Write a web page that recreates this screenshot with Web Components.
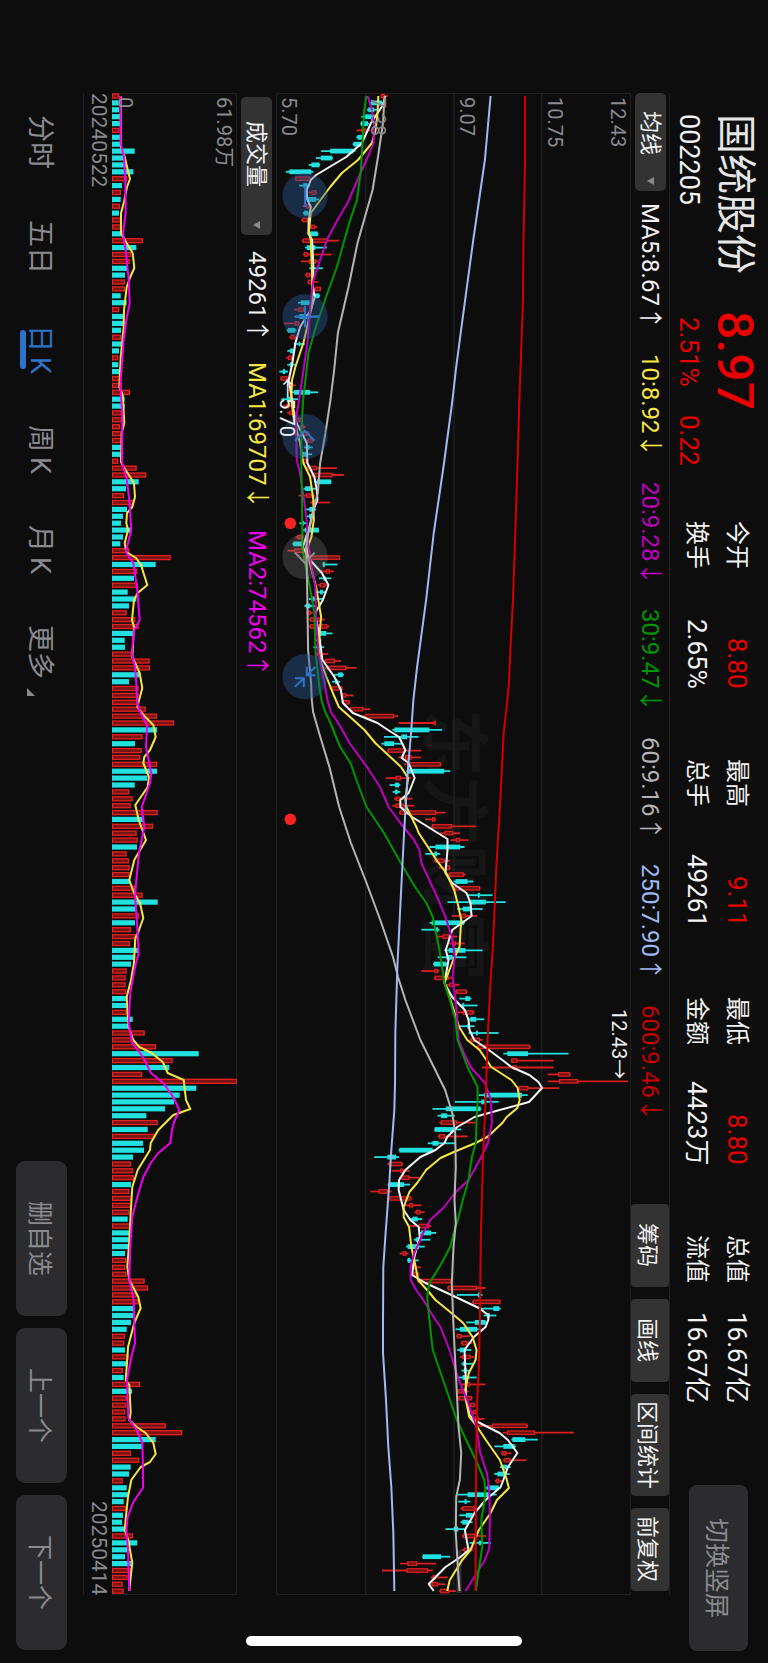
<!DOCTYPE html>
<html lang="zh-CN">
<head>
<meta charset="UTF-8">
<meta name="viewport" content="width=device-width, initial-scale=1.0">
<title>国统股份 002205</title>
<style>
  :root {
    --bg: #0d0d0d;
    --line: #202020;
    --chip: #333333;
    --button: #2c2c2e;
    --muted: #8a8a8e;
    --text: #f2f2f2;
    --up: #ea0000;
    --accent: #2f73c9;
  }
  html, body {
    margin: 0;
    height: 100%;
    background: var(--bg);
  }
  body {
    color: var(--text);
    font-family: Roboto, "Noto Sans CJK SC", sans-serif;
    overflow: hidden;
  }
</style>
</head>
<body>
<stock-screen>
  <quote-header slot="header" name="国统股份" code="002205" price="8.97" percent="2.51%" change="0.22">
    <stat-item label="今开" value="8.80" up></stat-item>
    <stat-item label="最高" value="9.11" up></stat-item>
    <stat-item label="最低" value="8.80" up></stat-item>
    <stat-item label="总值" value="16.67亿"></stat-item>
    <stat-item label="换手" value="2.65%"></stat-item>
    <stat-item label="总手" value="49261"></stat-item>
    <stat-item label="金额" value="4423万"></stat-item>
    <stat-item label="流值" value="16.67亿"></stat-item>
  </quote-header>

  <indicator-bar slot="main" label="均线" class="main">
    <ma-value style="color:#f2f2f2">MA5:8.67↑</ma-value>
    <ma-value style="color:#f5e642">10:8.92↓</ma-value>
    <ma-value style="color:#bf00bf">20:9.28↓</ma-value>
    <ma-value style="color:#009600">30:9.47↓</ma-value>
    <ma-value style="color:#b4b4b4">60:9.16↑</ma-value>
    <ma-value style="color:#a0b9f5">250:7.90↑</ma-value>
    <ma-value style="color:#c80000">600:9.46↓</ma-value>
    <tool-chip slot="tools">筹码</tool-chip>
    <tool-chip slot="tools">画线</tool-chip>
    <tool-chip slot="tools">区间统计</tool-chip>
    <tool-chip slot="tools">前复权</tool-chip>
  </indicator-bar>
  <price-chart slot="main"></price-chart>

  <indicator-bar slot="volume" label="成交量" inset>
    <ma-value style="color:#f2f2f2">49261↑</ma-value>
    <ma-value style="color:#f5e642">MA1:69707↓</ma-value>
    <ma-value style="color:#f000f0">MA2:74562↑</ma-value>
  </indicator-bar>
  <volume-chart slot="volume"></volume-chart>
  <date-axis slot="volume" from="20240522" to="20250414"></date-axis>

  <period-bar slot="footer"></period-bar>
</stock-screen>

<script>
// Landscape screen on a portrait window: everything below runs in
// vertical-rl, so "inline" is top to bottom and "block" is right to left.

const STEP = 6.89;
const FIRST = 3;
const LENGTH = 1502;

const CANDLES = `
r330,332,343,352 c298,303,335,340 c290,294,312,322 c273,285,305,312 c270,272,293,296 r259,274,286,300 c258,262,278,280 c247,250,272,277 c153,180,250,256 c137,152,186,188
c116,124,148,150 c47,58,124,130 r76,76,121,124 c87,100,112,120 r115,124,138,141 c105,112,138,147 r98,108,118,124 c98,101,115,118 r93,97,113,118 r118,122,134,142
c112,118,143,145 r95,98,172,206 c105,110,136,170 r98,102,113,184 r92,117,138,144 c118,124,130,158 r104,108,120,126 r112,114,130,144 r126,134,152,153 c124,132,148,150
c84,92,118,122 r72,84,101,104 c74,88,112,148 r41,74,86,90 c50,53,76,79 r58,62,74,80 c72,86,90,104 c52,60,70,75 r48,54,66,72 c52,60,68,76
c28,38,46,54 r30,32,52,62 r50,56,66,77 c66,72,120,144 c34,50,64,84 r40,48,58,64 r52,58,74,78 r76,82,92,94 r88,95,102,108 r96,100,117,120
r108,114,128,132 c102,108,118,128 c90,95,112,126 r90,96,110,114 r105,112,140,200 r124,126,187,221 c134,140,183,184 c100,105,122,138 r86,108,124,134 r120,126,138,180
c105,118,130,138 c110,117,126,130 c88,96,102,112 c96,104,146,147 r76,82,95,100 c67,70,98,100 r52,72,110,120 r100,100,209,210 c157,158,164,202 r148,167,179,191
c146,160,166,183 r143,149,165,170 c143,150,158,166 c116,124,134,160 c103,107,121,136 r108,112,122,128 r117,120,150,164 r115,120,172,178 c140,146,168,187 c138,142,150,154
c130,140,148,162 r138,142,154,174 r160,166,194,213 r164,170,228,259 c192,204,218,221 c186,195,202,210 r178,184,216,218 r212,216,228,250 r215,219,238,240 r236,240,279,300
r276,285,371,383 r385,490,494,495 c366,372,477,515 c341,393,410,444 c333,342,371,398 r350,353,404,453 r384,404,424,452 r400,414,511,513 c408,412,521,539 r346,376,392,422
c358,374,386,390 c367,374,382,390 r371,376,390,426 r366,376,400,432 r386,388,497,525 r464,485,494,496 r482,485,545,617 r509,522,548,568 r541,556,568,594 c477,495,569,582
c465,492,500,509 r490,495,522,538 r505,525,538,541 r532,536,580,586 c549,555,591,608 r545,552,628,630 c591,622,628,666 c531,596,646,705 c560,577,600,636 r544,572,586,620
c478,484,580,583 c453,493,503,507 r498,516,536,560 r536,548,556,582 c522,535,585,636 c502,528,546,588 c488,490,528,532 r452,492,503,507 r490,493,535,545 r528,536,550,567
r552,557,589,591 c566,584,598,603 c570,575,581,621 r560,577,609,612 c590,599,617,641 c566,590,597,612 c594,616,622,684 r597,600,628,637 r615,622,778,780 c698,710,772,893
r720,722,740,848 r635,726,738,848 r831,862,898,900 r831,865,922,1071 r740,744,773,865 c624,640,754,771 c553,632,642,684 c486,526,630,632 c501,512,530,553 r506,511,560,614
c491,493,552,572 r502,505,523,591 c472,486,504,554 c385,387,486,490 c312,351,377,386 r351,356,396,398 r364,390,400,418 r386,393,417,446 c352,356,401,419 r300,325,352,364
r354,357,421,424 r398,416,428,453 r432,438,450,463 c417,426,442,455 r419,445,477,483 c446,452,482,497 c430,436,446,480 c407,412,446,463 r388,397,408,415 c410,412,420,445
r420,426,436,452 r425,430,444,447 r440,444,542,544 r530,532,619,645 c559,622,629,636 r604,607,689,690 c632,668,686,690 c640,650,658,677 c587,613,645,652 c555,568,620,630
r557,559,573,598 r570,573,591,605 c560,568,586,602 r568,575,600,612 c573,577,584,607 c573,580,588,600 c560,576,586,618 r570,586,598,645 r560,563,576,594 r560,564,604,606
r590,600,613,615 r604,608,618,622 r604,612,624,641 r615,664,770,772 r697,709,793,909 c722,725,764,801 c671,698,732,736 r690,695,707,722 r697,701,719,767 c688,695,710,720
c671,680,700,717 r673,676,686,694 c646,650,684,690 c562,591,655,678 c563,582,588,599 r569,575,612,614 c566,586,606,610 c570,575,594,606 c525,550,563,582 r574,577,614,646
c597,625,632,661 r573,580,600,608 c455,457,512,539 r389,411,440,497 r335,409,473,487 r481,487,496,532 r478,485,502,524 r506,509,536,556`;

const VOLUMES = `
r358 c365 c357 c360 c360 r358 c360 c363 c404 c376 c378 c400 r382 c366 r363 c362 r360 c357 r363 r363
c372 r429 c409 r394 r389 c383 c375 r375 r375 c362 c380 r358 c370 c372 c363 r364 c367 c357 r355 c355
c360 r364 r366 r390 c374 c374 r366 r366 r360 r366 r366 c362 c362 r355 r410 r439 c416 c378 r372 r400
c381 c369 c363 c395 c369 c361 r388 r512 c467 r412 c402 r413 c383 c409 c387 r380 r406 r416 c398 c374
c375 r395 r449 r450 c418 c387 r416 r416 r412 r437 r471 r522 c471 r428 c405 r425 r421 r472 c471 c442
c404 r388 r398 r392 r473 c430 r459 r410 r413 c411 r380 r387 r389 r389 c390 r405 r428 c473 c408 r418
c405 r393 r412 r390 c414 c403 c393 r380 r377 r377 r379 c382 c382 r380 c398 c388 r434 r395 r468 c596
r518 c508 r427 r712 c589 c539 c522 c495 c439 r473 c443 r465 c429 c432 c399 r393 r399 r402 c393 r388
r395 r394 r388 c383 r393 c390 c390 c388 c375 r379 r376 r380 r434 r444 r410 r416 c400 c400 c393 c380
r375 r373 c375 r386 c380 r369 c371 r420 c396 r381 r379 r376 r377 r497 r547 c467 c427 r393 r418 c392
c387 r368 c380 c384 c371 r378 c369 c366 c374 r399 c412 c385 c375 c393 r394 r383 r368 r371`;

// each point is position:value
const PRICE_LINES = [
  ['#f5f5f5', '96:345 105:338 123:302 143:275 157:228 167:178 175:138 180:122 190:110 199:111 207:122 220:116 233:115 240:126 267:130 287:128 297:134 310:122 327:90 343:76 363:67 380:56 400:66 420:75 433:95 443:110 463:112 477:133 490:140 500:142 510:130 527:118 547:98 560:120 573:155 585:175 600:158 613:135 633:146 660:157 677:193 690:212 703:218 713:248 723:322 730:353 737:386 750:405 758:394 763:415 778:433 793:415 800:390 807:390 817:425 839:531 850:531 873:525 883:545 893:588 903:600 916:603 930:545 950:526 960:534 983:522 997:545 1010:583 1020:594 1030:597 1040:611 1050:655 1060:695 1067:722 1075:776 1082:803 1088:814 1102:775 1110:687 1117:612 1127:560 1137:530 1143:522 1150:495 1157:450 1170:405 1180:386 1190:385 1210:400 1220:420 1227:445 1237:448 1257:432 1275:425 1283:465 1293:530 1308:625 1315:653 1320:653 1327:645 1337:610 1350:582 1380:586 1397:586 1415:597 1420:610 1433:687 1440:712 1453:740 1467:712 1480:698 1487:690 1500:645 1513:612 1530:583 1550:594 1557:570 1567:525 1584:475 1591:490'],
  ['#f5e642', '96:324 113:322 130:316 143:305 160:263 173:215 187:180 213:122 233:116 240:122 267:125 287:127 307:125 317:118 343:100 367:76 380:66 400:64 420:72 443:90 463:100 477:120 500:130 520:131 537:124 550:110 567:122 587:138 603:146 617:153 647:145 660:150 677:169 693:188 707:206 720:250 730:283 743:315 757:360 767:392 778:413 800:405 807:408 827:438 833:445 860:498 873:527 890:551 907:564 920:572 947:567 960:548 983:522 1000:540 1027:566 1040:590 1050:627 1067:662 1080:722 1088:741 1100:747 1108:740 1117:708 1123:695 1137:650 1143:615 1152:550 1158:510 1170:467 1183:440 1192:417 1207:400 1217:400 1227:416 1247:423 1267:436 1280:443 1293:478 1300:495 1310:532 1323:578 1337:606 1350:618 1360:615 1373:595 1393:582 1417:596 1427:620 1440:646 1460:688 1477:706 1488:715 1500:679 1513:660 1530:625 1550:600 1560:575 1580:538 1591:530'],
  ['#bf00bf', '96:292 110:305 123:311 143:310 153:298 173:271 203:232 220:202 240:170 280:130 307:120 340:113 380:96 400:87 420:77 460:80 473:90 500:102 523:110 547:115 567:124 587:136 613:137 653:145 683:163 700:172 712:182 725:208 743:238 767:290 787:329 807:355 823:390 840:431 850:447 863:453 897:500 917:525 937:544 957:553 977:546 1000:555 1020:560 1040:564 1053:580 1067:600 1083:643 1100:661 1123:664 1143:652 1157:632 1180:594 1193:553 1207:521 1220:479 1233:458 1253:432 1267:420 1280:421 1290:437 1300:459 1320:495 1327:510 1350:537 1380:565 1400:590 1427:618 1453:629 1473:649 1490:656 1517:658 1548:656 1560:643 1591:585'],
  ['#009600', '96:288 113:281 140:277 170:272 200:260 223:237 267:200 293:172 327:137 353:115 380:106 400:99 433:94 467:94 500:96 547:97 563:105 587:119 613:133 650:136 687:148 700:154 710:163 720:177 747:210 763:241 787:266 807:289 833:341 867:398 887:434 903:468 917:487 950:507 983:522 1000:538 1020:555 1040:561 1067:591 1087:621 1100:621 1120:618 1143:616 1157:604 1180:594 1200:577 1220:562 1233:550 1247:539 1267:507 1283:477 1297:470 1320:477 1350:487 1387:525 1420:559 1433:577 1460:616 1480:641 1490:644 1500:642 1520:632 1547:635 1560:629 1591:616'],
  ['#b4b4b4', '96:343 123:338 157:323 190:307 243:262 287:235 333:203 347:199 370:192 400:181 433:166 463:150 493:143 507:132 520:124 537:112 547:108 567:110 600:112 650:114 683:123 700:125 712:129 733:147 767:178 807:207 843:242 883:289 920:330 957:368 977:383 1000:405 1040:450 1090:524 1113:545 1133:554 1167:556 1200:552 1223:556 1247:549 1283:544 1320:548 1353:553 1400:560 1427:564 1453:572 1480:568 1497:557 1533:556 1567:562 1591:567'],
  ['#a0b9f5', '96:660 160:643 240:608 317:577 370:556 400:546 467:519 533:490 600:467 667:440 700:429 733:422 767:413 833:401 900:391 967:381 1033:375 1083:374 1110:372 1150:363 1183:357 1233:346 1267:339 1320:338 1353:338 1400:347 1447:354 1487:363 1533:369 1591:372'],
  ['#d20000', '96:763 162:763 245:758 300:757 400:746 500:737 600:727 650:719 683:715 700:710 733:699 800:689 867:677 900:673 947:667 980:660 1033:652 1100:645 1160:637 1200:634 1233:631 1320:628 1367:625 1400:620 1450:617 1500:616 1591:615']
];

const VOLUME_LINES = [
  ['#f5e642', '96:362 147:363 157:374 168:382 179:390 187:381 202:372 213:363 233:363 242:378 253:398 268:403 277:391 287:380 310:372 327:371 357:362 387:358 395:368 423:373 433:365 462:363 468:373 483:402 497:405 507:397 513:381 523:379 530:384 543:374 552:379 558:408 565:423 585:442 593:413 600:402 620:396 627:402 657:397 673:419 688:427 707:412 717:436 725:460 737:467 750:450 757:433 763:430 777:447 787:443 805:406 820:416 840:438 860:403 880:388 893:402 903:420 918:430 932:415 938:406 963:402 980:393 997:380 1015:383 1027:386 1040:400 1047:418 1053:455 1062:488 1073:503 1080:551 1100:558 1109:571 1115:520 1130:475 1143:452 1150:450 1170:413 1187:397 1213:392 1240:388 1267:382 1280:388 1297:415 1308:422 1323:403 1347:384 1363:381 1380:377 1385:388 1413:392 1420:388 1427:410 1433:437 1443:460 1454:467 1462:450 1467:422 1480:394 1497:384 1513:379 1530:374 1540:385 1563:397 1577:392 1591:388'],
  ['#f000f0', '96:362 143:362 157:372 180:376 213:377 233:369 253:378 280:386 303:389 320:379 340:371 363:366 387:361 413:367 462:366 479:380 500:388 530:394 552:377 563:400 590:412 620:419 630:403 653:395 667:405 683:409 700:411 710:418 725:441 747:438 773:454 783:450 807:425 827:433 853:417 880:409 897:405 917:410 953:416 967:405 993:391 1023:386 1043:397 1057:429 1073:453 1083:490 1097:520 1110:538 1123:521 1130:516 1143:511 1153:475 1163:452 1177:430 1197:412 1217:397 1247:391 1280:388 1300:401 1323:403 1343:405 1357:394 1380:381 1418:385 1430:410 1443:427 1467:429 1488:429 1502:400 1517:383 1530:379 1550:384 1591:388']
];

const round = (n) => Math.round(n * 10) / 10;

function drawLines(lines, x) {
  return lines.map(([color, points]) => {
    const list = points.split(' ').map((p) => {
      const [pos, value] = p.split(':').map(Number);
      return round(x(value)) + ',' + (pos - 93);
    });
    return `<polyline points="${list.join(' ')}" fill="none" stroke="${color}" stroke-width="2" stroke-linejoin="round"/>`;
  }).join('');
}

class StockScreen extends HTMLElement {
  connectedCallback() {
    this.attachShadow({ mode: 'open' }).innerHTML = `
      <style>
        :host {
          position: relative;
          display: flex;
          flex-direction: column;
          box-sizing: border-box;
          width: 100%;
          height: 100%;
          writing-mode: vertical-rl;
          text-orientation: sideways;
          background: var(--bg);
        }
        section {
          display: flex;
          flex-direction: column;
          min-block-size: 0;
          margin-inline: 93px 68px;
        }
        .main { flex: 394 1 0; }
        .volume { flex: 193 1 0; }
        .home {
          position: absolute;
          bottom: 17px;
          left: 32%;
          right: 32%;
          height: 10px;
          border-radius: 5px;
          background: white;
        }
      </style>
      <slot name="header"></slot>
      <section class="main"><slot name="main"></slot></section>
      <section class="volume"><slot name="volume"></slot></section>
      <slot name="footer"></slot>
      <div class="home"></div>
    `;
  }
}

class QuoteHeader extends HTMLElement {
  connectedCallback() {
    const get = (key) => this.getAttribute(key);
    this.attachShadow({ mode: 'open' }).innerHTML = `
      <style>
        :host {
          display: flex;
          flex: none;
          align-items: flex-start;
          box-sizing: border-box;
          block-size: 98px;
          padding-inline: 114px 12px;
        }
        .quote {
          display: grid;
          grid-template-columns: 197px 210px;
          grid-template-rows: 54px 38px;
          align-items: center;
          padding-block-start: 6px;
        }
        h1, p { margin: 0; }
        h1 {
          font-size: 40px;
          font-weight: 400;
          line-height: 54px;
          color: #e6e6e6;
        }
        .code { font-size: 27px; line-height: 38px; }
        .price {
          font-size: 50px;
          font-weight: 500;
          line-height: 54px;
          color: var(--up);
        }
        .change {
          display: flex;
          gap: 28px;
          padding-inline-start: 6px;
          font-size: 26px;
          line-height: 38px;
          color: var(--up);
        }
        .stats {
          flex: 1;
          display: grid;
          grid-template-columns: repeat(4, 1fr);
          column-gap: 70px;
          padding-block-start: 11px;
          margin-inline-end: 82px;
        }
        button {
          inline-size: 166px;
          block-size: 59px;
          margin: 0;
          margin-block-start: 20px;
          padding: 0;
          border: 0;
          border-radius: 8px;
          background: var(--button);
          color: var(--muted);
          font: inherit;
          font-size: 25px;
        }
      </style>
      <div class="quote">
        <h1>${get('name')}</h1>
        <p class="price">${get('price')}</p>
        <p class="code">${get('code')}</p>
        <p class="change"><span>${get('percent')}</span><span>${get('change')}</span></p>
      </div>
      <div class="stats"><slot></slot></div>
      <button type="button">切换竖屏</button>
    `;
  }
}

class StatItem extends HTMLElement {
  connectedCallback() {
    this.attachShadow({ mode: 'open' }).innerHTML = `
      <style>
        :host {
          display: flex;
          justify-content: space-between;
          align-items: center;
          line-height: 40px;
          white-space: nowrap;
        }
        .label { font-size: 24px; }
        .value { font-size: 26px; }
        :host([up]) .value { color: var(--up); }
      </style>
      <span class="label">${this.getAttribute('label')}</span>
      <span class="value">${this.getAttribute('value')}</span>
    `;
  }
}

class IndicatorBar extends HTMLElement {
  connectedCallback() {
    const label = this.getAttribute('label');
    this.attachShadow({ mode: 'open' }).innerHTML = `
      <style>
        :host {
          display: flex;
          flex: none;
          align-items: center;
          box-sizing: border-box;
          block-size: 39px;
        }
        :host(.main) {
          border-block-start: 1px solid var(--line);
        }
        .picker {
          display: flex;
          align-items: center;
          justify-content: space-between;
          box-sizing: border-box;
          block-size: 31px;
          inline-size: 98px;
          padding-inline: 18px 6px;
          border-radius: 5px;
          background: var(--chip);
        }
        :host([inset]) .picker {
          inline-size: 138px;
          padding-inline: 24px 6px;
          margin-inline-start: 4px;
        }
        select {
          appearance: none;
          margin: 0;
          padding: 0;
          border: 0;
          background: none;
          color: var(--text);
          font: inherit;
          font-size: 22px;
          line-height: 31px;
        }
        svg { width: 7px; height: 8px; flex: none; fill: var(--muted); }
        .values {
          flex: 1;
          display: flex;
          gap: 24px;
          padding-inline-start: 12px;
        }
        :host([inset]) .values { gap: 20px; padding-inline-start: 16px; }
        .tools { display: flex; gap: 12px; margin-inline-end: 4px; }
      </style>
      <div class="picker">
        <select aria-label="${label}"><option>${label}</option></select>
        <svg viewBox="0 0 7 8"><path d="M0 4L7 0V8z"/></svg>
      </div>
      <div class="values"><slot></slot></div>
      <div class="tools"><slot name="tools"></slot></div>
    `;
  }
}

class MaValue extends HTMLElement {
  connectedCallback() {
    this.attachShadow({ mode: 'open' }).innerHTML = `
      <style>
        :host {
          display: block;
          font-size: 24px;
          line-height: 38px;
          white-space: nowrap;
        }
      </style>
      <slot></slot>
    `;
  }
}

class ToolChip extends HTMLElement {
  connectedCallback() {
    this.attachShadow({ mode: 'open' }).innerHTML = `
      <style>
        :host { display: block; }
        button {
          display: block;
          min-inline-size: 83px;
          block-size: 38px;
          margin: 0;
          padding: 0;
          padding-inline: 7px;
          border: 0;
          border-radius: 4px;
          background: var(--chip);
          color: var(--text);
          font: inherit;
          font-size: 22px;
          white-space: nowrap;
        }
      </style>
      <button type="button"><slot></slot></button>
    `;
  }
}

class PriceChart extends HTMLElement {
  connectedCallback() {
    const x = (v) => (v - 18) / 3;
    const candles = CANDLES.trim().split(/\s+/).map((item, i) => {
      const [low, from, to, high] = item.slice(1).split(',').map((v) => round(x(+v)));
      const y = round(FIRST + i * STEP);
      const up = item[0] === 'r';
      const color = up ? '#dc1e1e' : '#22e1e1';
      const body = up
        ? `<rect x="${from + 0.5}" y="${y - 1.7}" width="${Math.max(1, to - from - 1)}" height="3.4" fill="#641414" stroke="${color}" stroke-width="1.3"/>`
        : `<rect x="${from}" y="${y - 2.4}" width="${Math.max(1.5, to - from)}" height="4.8" fill="${color}"/>`;
      return `<path d="M${low} ${y}H${high}" stroke="${color}" stroke-width="1.8"/>${body}`;
    }).join('');

    this.attachShadow({ mode: 'open' }).innerHTML = `
      <style>
        :host {
          position: relative;
          display: block;
          flex: 1;
          min-block-size: 0;
          box-sizing: border-box;
          outline: 1px solid var(--line);
          outline-offset: -1px;
        }
        svg {
          position: absolute;
          inset: 0;
          width: 100%;
          height: 100%;
          overflow: visible;
        }
        span {
          position: absolute;
          inset-inline-start: 4px;
          font-size: 20px;
          line-height: 26px;
          color: var(--muted);
        }
        .watermark {
          inset-inline-start: 41%;
          inset-block-end: 40%;
          font-size: 68px;
          font-weight: 700;
          line-height: 70px;
          color: #161616;
        }
        .high, .low { color: #f0f0f0; }
        .high {
          inset-block-start: -1px;
          inset-inline: auto calc(34% + 5px);
        }
        .low { inset-block-end: -2px; inset-inline-start: 19%; }
      </style>
      <span class="watermark" aria-hidden="true">东方财富</span>
      <svg viewBox="0 0 354 ${LENGTH}" preserveAspectRatio="none">
        <path d="M89.5 0V1502M177.5 0V1502M265 0V1502" stroke="#242424" stroke-width="1.2"/>
        <path d="M182.5 1457V1500" stroke="#303030" stroke-width="5"/>
        ${candles}
        ${drawLines(PRICE_LINES, x)}
        <g fill="#f52222">
          <circle cx="14.3" cy="430.3" r="5.8"/>
          <circle cx="14.3" cy="726.3" r="5.8"/>
        </g>
        <g fill="#2a5a96" fill-opacity="0.42">
          <circle cx="29" cy="102.7" r="22.6"/>
          <circle cx="29" cy="223.7" r="22.6"/>
          <circle cx="29" cy="343.7" r="22.6"/>
          <circle cx="29" cy="583.7" r="22.6"/>
        </g>
        <circle cx="29" cy="463.7" r="22.6" fill="#909090" fill-opacity="0.25"/>
        <g fill="none" stroke="#2f73c9" stroke-width="2">
          <path d="M29 92.7V113.7"/>
          <path d="M29 213V234.5M18.5 223.7H43"/>
          <path d="M19 347.7L28.500 337.7L38.500 347.7"/>
          <path d="M39.5 573.7L30.7 582.3M30.7 573.7V582.3H39.5"/>
          <path d="M19 593.7L27.7 585.3M19 585.3H27.7V594.3"/>
        </g>
        <path d="M19 459.7L28.7 469.7L38.5 459.7" fill="none" stroke="#8c8c8c" stroke-width="2"/>
      </svg>
      <span style="inset-block-end: 0">5.70</span>
      <span style="inset-block-end: 25%">7.38</span>
      <span style="inset-block-end: 50%">9.07</span>
      <span style="inset-block-end: 75%">10.75</span>
      <span style="inset-block-start: 0">12.43</span>
      <span class="high">12.43→</span>
      <span class="low">←5.70</span>
    `;
  }
}

class VolumeChart extends HTMLElement {
  connectedCallback() {
    const x = (v) => (v - 336) / 3;
    const bars = VOLUMES.trim().split(/\s+/).map((item, i) => {
      const width = x(+item.slice(1));
      const y = FIRST + i * STEP;
      if (item[0] === 'r') {
        return `<rect x="0.6" y="${round(y - 2)}" width="${round(width - 1.2)}" height="4" fill="#781414" stroke="#e62020" stroke-width="1.3"/>`;
      }
      return `<rect x="0" y="${round(y - 2.6)}" width="${round(width)}" height="5.2" fill="#22e1e1"/>`;
    }).join('');

    this.attachShadow({ mode: 'open' }).innerHTML = `
      <style>
        :host {
          position: relative;
          display: block;
          flex: 1;
          min-block-size: 0;
          box-sizing: border-box;
          outline: 1px solid var(--line);
          outline-offset: -1px;
        }
        svg {
          position: absolute;
          inset: 0;
          width: 100%;
          height: 100%;
        }
        span {
          position: absolute;
          inset-inline-start: 4px;
          font-size: 20px;
          line-height: 26px;
          color: var(--muted);
        }
      </style>
      <svg viewBox="0 0 125 ${LENGTH}" preserveAspectRatio="none">
        ${bars}
        ${drawLines(VOLUME_LINES, x)}
      </svg>
      <span style="inset-block-start: 0">61.98万</span>
      <span style="inset-block-end: 0">0</span>
    `;
  }
}

class DateAxis extends HTMLElement {
  connectedCallback() {
    this.attachShadow({ mode: 'open' }).innerHTML = `
      <style>
        :host {
          display: flex;
          flex: none;
          justify-content: space-between;
          box-sizing: border-box;
          block-size: 29px;
          border-block-end: 1px solid var(--line);
          font-size: 21px;
          line-height: 27px;
          color: var(--muted);
        }
      </style>
      <time>${this.getAttribute('from')}</time>
      <time>${this.getAttribute('to')}</time>
    `;
  }
}

class PeriodBar extends HTMLElement {
  connectedCallback() {
    this.attachShadow({ mode: 'open' }).innerHTML = `
      <style>
        :host {
          display: flex;
          flex: none;
          align-items: center;
          justify-content: space-between;
          box-sizing: border-box;
          block-size: 83px;
          padding-inline: 115px 13px;
        }
        nav {
          display: flex;
          gap: 51px;
          padding-block-start: 4px;
        }
        .actions { display: flex; gap: 12px; }
        button {
          margin: 0;
          padding: 0;
          border: 0;
          background: none;
          color: var(--muted);
          font: inherit;
        }
        nav button {
          position: relative;
          display: flex;
          align-items: center;
          gap: 5px;
          font-size: 27px;
          line-height: 42px;
        }
        nav button.on { color: var(--accent); }
        nav button.on::after {
          content: "";
          position: absolute;
          inset-inline: 5px;
          inset-block-end: 1px;
          block-size: 6px;
          border-radius: 3px;
          background: var(--accent);
        }
        nav svg {
          align-self: flex-end;
          width: 8px;
          height: 8px;
          margin-block-end: 8px;
          margin-inline-start: 4px;
          fill: var(--muted);
        }
        .actions button {
          inline-size: 155px;
          block-size: 51px;
          border-radius: 9px;
          background: var(--button);
          font-size: 25px;
        }
      </style>
      <nav>
        <button type="button">分时</button>
        <button type="button">五日</button>
        <button type="button" class="on"><span>日</span><span>K</span></button>
        <button type="button"><span>周</span><span>K</span></button>
        <button type="button"><span>月</span><span>K</span></button>
        <button type="button">更多<svg viewBox="0 0 8 8"><path d="M0 0V8H8z"/></svg></button>
      </nav>
      <div class="actions">
        <button type="button">删自选</button>
        <button type="button">上一个</button>
        <button type="button">下一个</button>
      </div>
    `;
  }
}

customElements.define('stock-screen', StockScreen);
customElements.define('quote-header', QuoteHeader);
customElements.define('stat-item', StatItem);
customElements.define('indicator-bar', IndicatorBar);
customElements.define('ma-value', MaValue);
customElements.define('tool-chip', ToolChip);
customElements.define('price-chart', PriceChart);
customElements.define('volume-chart', VolumeChart);
customElements.define('date-axis', DateAxis);
customElements.define('period-bar', PeriodBar);
</script>
</body>
</html>
